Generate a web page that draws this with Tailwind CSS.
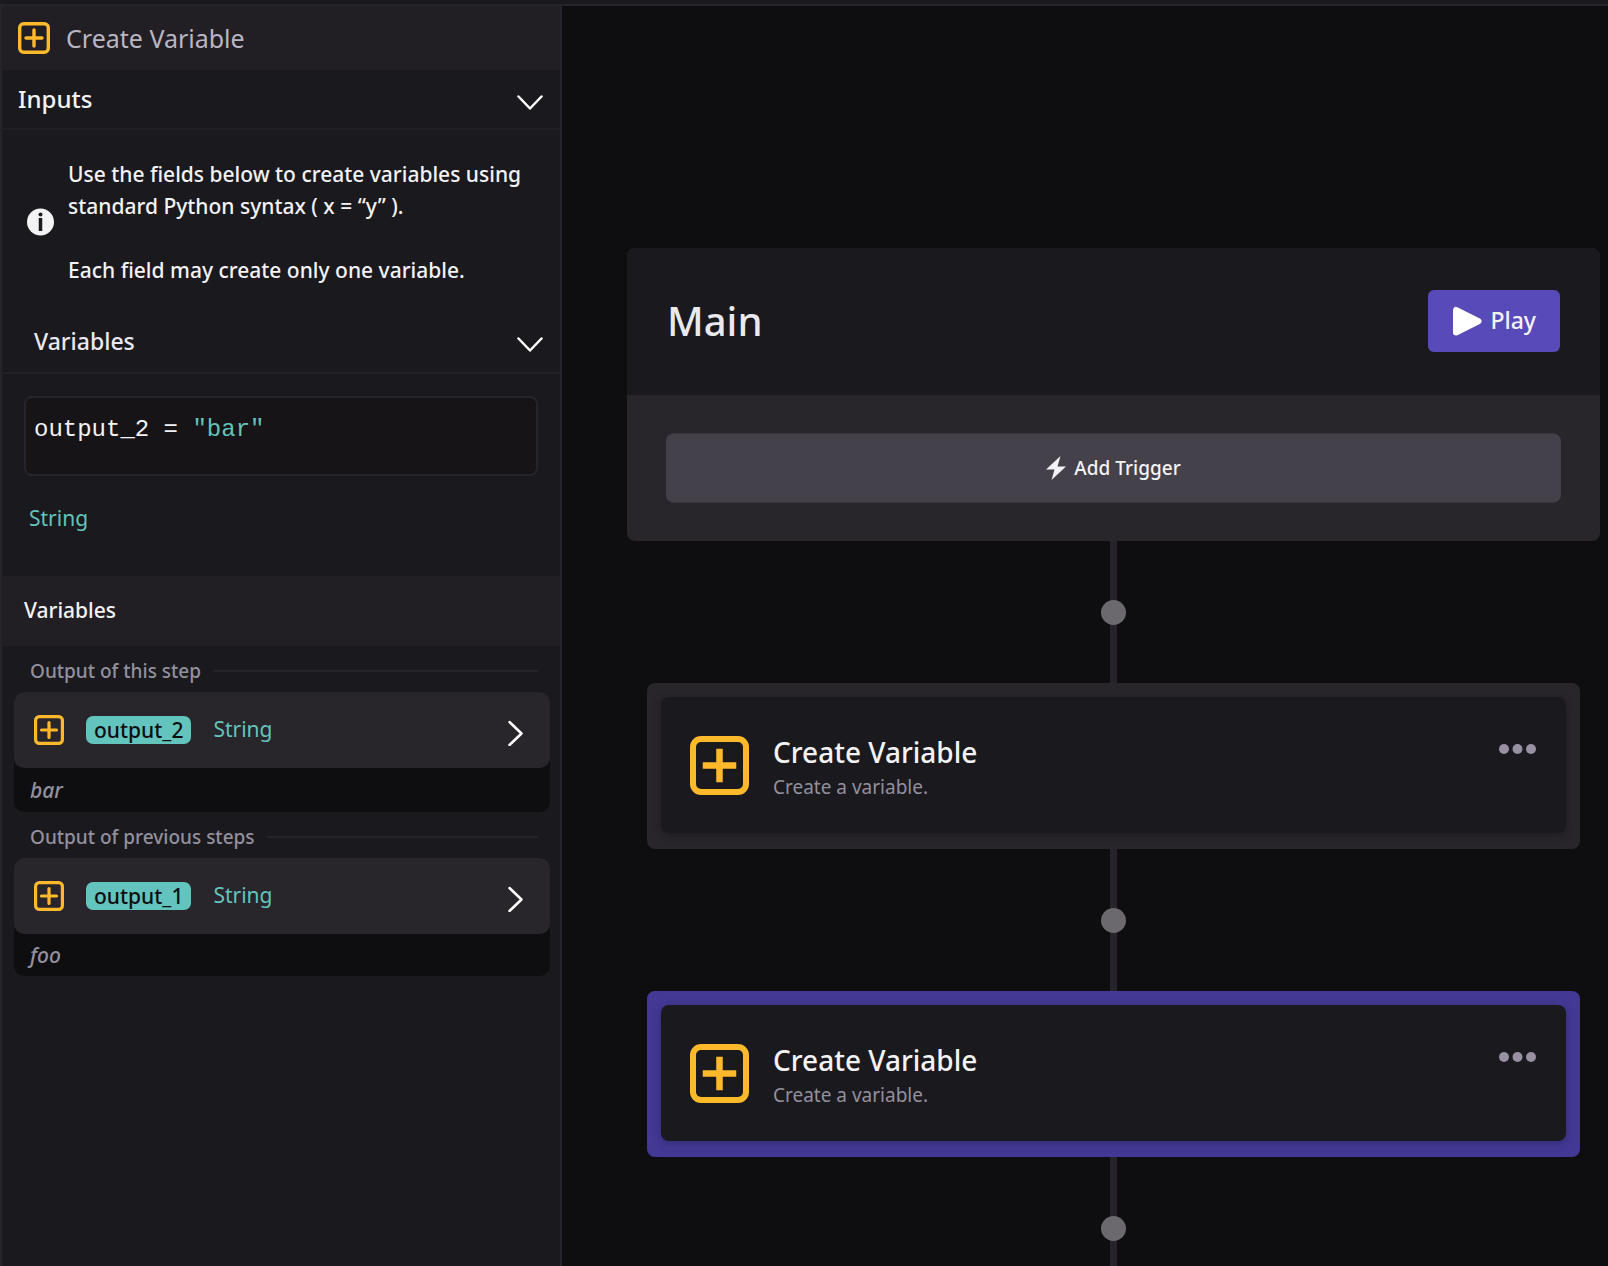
<!DOCTYPE html>
<html lang="en">
<head>
<meta charset="utf-8">
<title>Create Variable</title>
<script src="https://cdn.jsdelivr.net/npm/@tailwindcss/browser@4"></script>
</head>
<body class="flex h-screen flex-col overflow-hidden bg-[#0e0e10] font-['Noto_Sans',sans-serif] font-medium text-[#f3f2f5]">
<svg class="hidden" aria-hidden="true">
  <symbol id="plus-box" viewBox="0 0 59 59">
    <rect x="3" y="3" width="53" height="53" rx="8" fill="none" stroke="currentColor" stroke-width="6"/>
    <path d="M29.500 16v27M16 29.500h27" fill="none" stroke="currentColor" stroke-width="6.500" stroke-linecap="square" stroke-linejoin="round"/>
  </symbol>
  <symbol id="plus-box-sm" viewBox="0 0 32 32">
    <rect x="1.700" y="1.700" width="28.600" height="28.600" rx="4" fill="none" stroke="currentColor" stroke-width="3.400"/>
    <path d="M16 8v16M8 16h16" fill="none" stroke="currentColor" stroke-width="3.400" stroke-linecap="round"/>
  </symbol>
  <symbol id="chevron-down" viewBox="0 0 26 22">
    <path d="M1.500 8.500 13 20.500 24.500 8.500" fill="none" stroke="currentColor" stroke-width="2.500" stroke-linecap="round" stroke-linejoin="round"/>
  </symbol>
  <symbol id="chevron-right" viewBox="0 0 16 32">
    <path d="M1.500 8 13.500 19.500 1.500 31" fill="none" stroke="currentColor" stroke-width="2.500" stroke-linecap="round" stroke-linejoin="round"/>
  </symbol>
  <symbol id="dots" viewBox="0 0 38 10">
    <circle cx="5" cy="5" r="5" fill="currentColor"/><circle cx="18.500" cy="5" r="5" fill="currentColor"/><circle cx="32" cy="5" r="5" fill="currentColor"/>
  </symbol>
</svg>

<div class="h-1.5 shrink-0 border-b-2 border-[#26242b] bg-[#1a191d]"></div>

<div class="flex min-h-0 flex-1">
  <aside class="flex w-[562px] shrink-0 flex-col border-x-2 border-[#26242b] bg-[#1a191d]">
    <header class="flex h-16 shrink-0 items-center gap-4 bg-[#221f24] px-4">
      <svg class="size-8 text-[#ffb92a]"><use href="#plus-box-sm"/></svg>
      <h1 class="text-[25px] leading-8 font-normal text-[#bab6c3]">Create Variable</h1>
    </header>

    <button type="button" class="flex h-15 shrink-0 items-center justify-between border-b-2 border-[#221f25] pr-[17px] pl-4 text-left text-2xl">
      <span>Inputs</span>
      <svg class="h-5.5 w-6.5 text-white"><use href="#chevron-down"/></svg>
    </button>

    <div class="flex shrink-0 items-center gap-3.5 pt-7 pb-6 pl-6">
      <svg class="size-7 shrink-0" viewBox="0 0 28 28" aria-hidden="true">
        <circle cx="14.500" cy="14" r="13.500" fill="#f3f2f5"/>
        <circle cx="14.500" cy="6.500" r="2" fill="#1a191d"/>
        <path d="M14.500 10v13" stroke="#1a191d" stroke-width="3.500"/>
      </svg>
      <div class="text-[21px] leading-8">
        <p>Use the fields below to create variables using<br>standard Python syntax ( x = “y” ).</p>
        <p class="mt-8">Each field may create only one variable.</p>
      </div>
    </div>

    <button type="button" class="flex h-16 shrink-0 items-center justify-between border-b-2 border-[#221f25] pr-[17px] pl-8 text-left text-[23px] text-[#ebe9ef]">
      <span>Variables</span>
      <svg class="h-5.5 w-6.5 text-white"><use href="#chevron-down"/></svg>
    </button>

    <div class="shrink-0 px-5.5 pt-5.5 pb-11">
      <div role="textbox" aria-label="Variable expression" contenteditable="true" spellcheck="false" class="h-20 rounded-lg border-2 border-[#26242b] bg-[#161416] px-2 pt-4 font-['Liberation_Mono',monospace] text-2xl leading-8 whitespace-pre">output_2 = <span class="text-[#62c4bd]">"bar"</span></div>
      <p class="mt-7 px-[5px] text-[21px] leading-7 font-normal text-[#62c4bd]">String</p>
    </div>

    <h2 class="flex h-17.5 shrink-0 items-center bg-[#221f24] px-5.5 text-[21px]">Variables</h2>

    <section class="pr-2.5 pl-3">
      <div class="flex h-11.5 items-center gap-3 px-4 pt-1 pr-3">
        <h3 class="text-[19px] text-[#93909e]">Output of this step</h3>
        <div class="h-0.5 flex-1 bg-[#26242b]"></div>
      </div>
      <div class="rounded-[10px] bg-[#0e0e10]">
        <button type="button" class="flex h-19 w-full items-center rounded-[10px] bg-[#28252b] pr-6.5 pl-5 text-left text-[21px]">
          <svg class="size-[30px] text-[#ffb92a]"><use href="#plus-box-sm"/></svg>
          <span class="ml-5.5 rounded-[7px] bg-[#62c4bd] px-2 leading-7 text-[#0e0e10]">output_2</span>
          <span class="ml-5.5 font-normal text-[#62c4bd]">String</span>
          <svg class="ml-auto h-8 w-4 text-white"><use href="#chevron-right"/></svg>
        </button>
        <p class="px-4 text-[21px] leading-11 text-[#93909e] italic">bar</p>
      </div>
    </section>

    <section class="pr-2.5 pl-3">
      <div class="flex h-11.5 items-center gap-3 px-4 pt-1 pr-3">
        <h3 class="text-[19px] text-[#93909e]">Output of previous steps</h3>
        <div class="h-0.5 flex-1 bg-[#26242b]"></div>
      </div>
      <div class="rounded-[10px] bg-[#0e0e10]">
        <button type="button" class="flex h-19 w-full items-center rounded-[10px] bg-[#28252b] pr-6.5 pl-5 text-left text-[21px]">
          <svg class="size-[30px] text-[#ffb92a]"><use href="#plus-box-sm"/></svg>
          <span class="ml-5.5 rounded-[7px] bg-[#62c4bd] px-2 leading-7 text-[#0e0e10]">output_1</span>
          <span class="ml-5.5 font-normal text-[#62c4bd]">String</span>
          <svg class="ml-auto h-8 w-4 text-white"><use href="#chevron-right"/></svg>
        </button>
        <p class="px-4 text-[21px] leading-[42px] text-[#93909e] italic">foo</p>
      </div>
    </section>
  </aside>

  <main class="min-w-0 flex-1 overflow-hidden pt-[242px] pr-2 pl-[65px]">
    <section class="overflow-hidden rounded-lg bg-[#28252b]">
      <div class="flex h-[147px] items-center justify-between bg-[#1a191d] pr-10 pb-0.5 pl-10">
        <h2 class="text-[40px] leading-12 text-[#ebe9ef]">Main</h2>
        <button type="button" class="flex h-[62px] items-center gap-2 rounded-md bg-[#584bb9] px-6 text-[23px]">
          <svg class="size-[30px]" viewBox="0 0 30 30" aria-hidden="true"><path d="M4 4v22.500L26.500 15.200Z" fill="#fff" stroke="#fff" stroke-width="6" stroke-linejoin="round"/></svg>
          <span>Play</span>
        </button>
      </div>
      <div class="px-[39px] py-[38px]">
        <button type="button" class="flex h-[70px] w-full items-center justify-center gap-2 rounded-lg border-y border-[#3b3841] bg-[#45414b] text-[19px]">
          <svg class="h-6 w-5" viewBox="0 0 20 24" aria-hidden="true"><path d="M14.500 0 0 13.500h8.500L5.500 24 20 10.500h-8.500Z" fill="#f3f2f5"/></svg>
          <span>Add Trigger</span>
        </button>
      </div>
    </section>

    <div class="flex flex-col items-center">
      <div class="grid h-[142px] w-6.5 place-items-center">
        <div class="col-start-1 row-start-1 h-full w-[7px] bg-[#26242a]"></div>
        <button type="button" aria-label="Add step" class="col-start-1 row-start-1 size-[25px] rounded-full bg-[#6b696d]"></button>
      </div>
    </div>

    <article class="mx-5 rounded-lg bg-[#28252b] px-3.5 pt-3.5 pb-4">
      <div class="flex h-34 items-center gap-6 rounded-lg bg-[#1a191d] px-[29px] shadow-[0_2px_10px_rgba(0,0,0,0.25)]">
        <svg class="size-[59px] shrink-0 text-[#ffb92a]"><use href="#plus-box"/></svg>
        <div class="min-w-0 flex-1 pt-1.5">
          <h3 class="text-[28px] leading-[38px]">Create Variable</h3>
          <p class="text-[19px] leading-8 font-normal text-[#93909e]">Create a variable.</p>
        </div>
        <button type="button" aria-label="More actions" class="pb-8"><svg class="h-2.5 w-[38px] text-[#9791a3]"><use href="#dots"/></svg></button>
      </div>
    </article>

    <div class="flex flex-col items-center">
      <div class="grid h-[142px] w-6.5 place-items-center">
        <div class="col-start-1 row-start-1 h-full w-[7px] bg-[#26242a]"></div>
        <button type="button" aria-label="Add step" class="col-start-1 row-start-1 size-[25px] rounded-full bg-[#6b696d]"></button>
      </div>
    </div>

    <article class="mx-5 rounded-lg bg-[#433995] px-3.5 pt-3.5 pb-4">
      <div class="flex h-34 items-center gap-6 rounded-lg bg-[#1a191d] px-[29px] shadow-[0_2px_10px_rgba(0,0,0,0.25)]">
        <svg class="size-[59px] shrink-0 text-[#ffb92a]"><use href="#plus-box"/></svg>
        <div class="min-w-0 flex-1 pt-1.5">
          <h3 class="text-[28px] leading-[38px]">Create Variable</h3>
          <p class="text-[19px] leading-8 font-normal text-[#93909e]">Create a variable.</p>
        </div>
        <button type="button" aria-label="More actions" class="pb-8"><svg class="h-2.5 w-[38px] text-[#9791a3]"><use href="#dots"/></svg></button>
      </div>
    </article>

    <div class="flex flex-col items-center">
      <div class="grid h-[142px] w-6.5 place-items-center">
        <div class="col-start-1 row-start-1 h-full w-[7px] bg-[#26242a]"></div>
        <button type="button" aria-label="Add step" class="col-start-1 row-start-1 size-[25px] rounded-full bg-[#6b696d]"></button>
      </div>
    </div>
  </main>
</div>
</body>
</html>
